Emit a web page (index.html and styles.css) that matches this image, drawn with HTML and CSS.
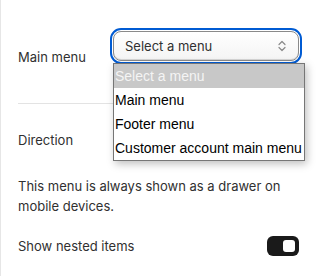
FILE: index.html
```html
<!DOCTYPE html>
<html>
<head>
<meta charset="utf-8">
<link rel="stylesheet" href="styles.css">
</head>
<body>
<div class="panel">
  <div class="row menu-row">
    <div class="label label-low">Main menu</div>
    <div class="select-wrap">
      <div class="select">
        <span>Select a menu</span>
        <svg class="chev" width="10" height="14" viewBox="0 0 10 14"><path d="M2 5.5 L5 2.5 L8 5.5 M2 8.5 L5 11.5 L8 8.5" fill="none" stroke="#8a8a8a" stroke-width="1.2" stroke-linecap="round" stroke-linejoin="round"/></svg>
      </div>
      <ul class="dropdown">
        <li class="opt sel">Select a menu</li>
        <li class="opt">Main menu</li>
        <li class="opt">Footer menu</li>
        <li class="opt">Customer account main menu</li>
      </ul>
    </div>
  </div>
  <hr class="divider">
  <div class="label direction">Direction</div>
  <p class="help">This menu is always shown as a drawer on mobile devices.</p>
  <div class="row toggle-row">
    <div class="label">Show nested items</div>
    <div class="toggle"><div class="knob"></div></div>
  </div>
</div>
</body>
</html>
```
FILE: styles.css
```css
html, body {
  margin: 0;
  padding: 0;
  background: #ffffff;
  width: 319px;
  height: 276px;
  overflow: hidden;
}
.panel {
  border-left: 1px solid #e6e6e6;
  height: 276px;
  box-sizing: border-box;
  padding: 31px 18px 0 17px;
  font-family: Inter, "Noto Sans", sans-serif;
  font-size: 13px;
  color: #303030;
}
.label {
  line-height: 20px;
}
.row {
  display: flex;
  justify-content: space-between;
}
.menu-row {
  align-items: flex-start;
}
.label-low {
  padding-top: 16px;
}
.select-wrap {
  position: relative;
  width: 186px;
  margin-right: 2px;
}
.select {
  box-sizing: border-box;
  height: 30px;
  border: 1px solid #8a8a8a;
  border-radius: 8px;
  outline: 2px solid #005bd3;
  outline-offset: 1px;
  background: linear-gradient(#ffffff, #f4f4f4);
  display: flex;
  align-items: center;
  justify-content: space-between;
  padding: 0 11px 0 11px;
  box-shadow: inset 0 -1px 0 #d4d4d4;
}
.chev {
  display: block;
}
.dropdown {
  position: absolute;
  top: 32px;
  left: 0;
  width: 192px;
  margin: 0;
  padding: 0;
  list-style: none;
  background: #ffffff;
  border: 1px solid #767676;
  box-sizing: border-box;
  box-shadow: 2px 3px 8px rgba(0, 0, 0, 0.25);
  font-family: "Liberation Sans", Arial, sans-serif;
  font-size: 14px;
  color: #000000;
  z-index: 2;
}
.opt {
  height: 24px;
  line-height: 24px;
  padding: 0 0 0 1px;
  white-space: nowrap;
}
.opt.sel {
  background: #c8c8c8;
  color: #f4f4f4;
}
.divider {
  border: 0;
  border-top: 1px solid #e3e3e3;
  margin: 36px 0 0 0;
  height: 0;
}
.direction {
  margin-top: 26px;
}
.help {
  margin: 26px 0 0 0;
  line-height: 20px;
}
.toggle-row {
  align-items: center;
  margin-top: 20px;
}
.toggle {
  width: 32px;
  height: 20px;
  border-radius: 6px;
  background: #1a1a1a;
  box-sizing: border-box;
  position: relative;
  margin-right: 2px;
}
.knob {
  position: absolute;
  right: 4px;
  top: 4px;
  width: 12px;
  height: 12px;
  border-radius: 3px;
  background: #ffffff;
}
```
